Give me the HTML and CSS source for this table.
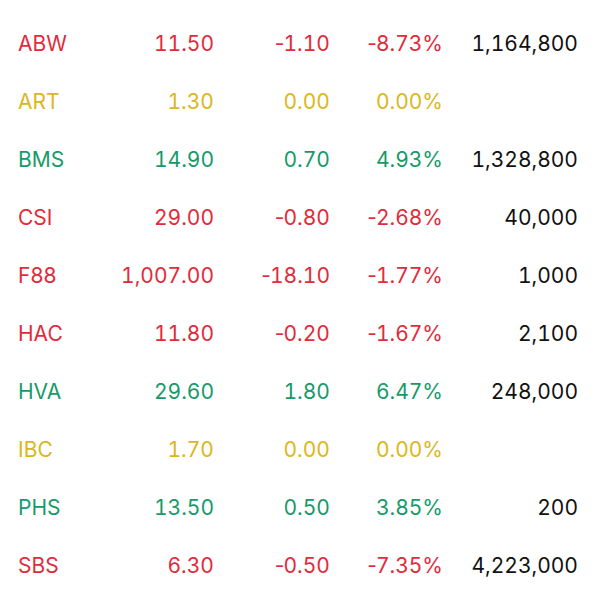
FILE: index.html
```html
<!DOCTYPE html>
<html>
<head>
<meta charset="utf-8">
<link rel="stylesheet" href="styles.css">
</head>
<body>
<div class="table">
  <div class="row down"><span class="sym">ABW</span><span class="num">11.50</span><span class="num"><i>-</i>1.10</span><span class="num"><i>-</i>8.73%</span><span class="vol">1,164,800</span></div>
  <div class="row flat"><span class="sym">ART</span><span class="num">1.30</span><span class="num">0.00</span><span class="num">0.00%</span><span class="vol"></span></div>
  <div class="row up"><span class="sym">BMS</span><span class="num">14.90</span><span class="num">0.70</span><span class="num">4.93%</span><span class="vol">1,328,800</span></div>
  <div class="row down"><span class="sym">CSI</span><span class="num">29.00</span><span class="num"><i>-</i>0.80</span><span class="num"><i>-</i>2.68%</span><span class="vol">40,000</span></div>
  <div class="row down"><span class="sym">F88</span><span class="num">1,007.00</span><span class="num"><i>-</i>18.10</span><span class="num"><i>-</i>1.77%</span><span class="vol">1,000</span></div>
  <div class="row down"><span class="sym">HAC</span><span class="num">11.80</span><span class="num"><i>-</i>0.20</span><span class="num"><i>-</i>1.67%</span><span class="vol">2,100</span></div>
  <div class="row up"><span class="sym">HVA</span><span class="num">29.60</span><span class="num">1.80</span><span class="num">6.47%</span><span class="vol">248,000</span></div>
  <div class="row flat"><span class="sym">IBC</span><span class="num">1.70</span><span class="num">0.00</span><span class="num">0.00%</span><span class="vol"></span></div>
  <div class="row up"><span class="sym">PHS</span><span class="num">13.50</span><span class="num">0.50</span><span class="num">3.85%</span><span class="vol">200</span></div>
  <div class="row down"><span class="sym">SBS</span><span class="num">6.30</span><span class="num"><i>-</i>0.50</span><span class="num"><i>-</i>7.35%</span><span class="vol">4,223,000</span></div>
</div>
</body>
</html>
```
FILE: styles.css
```css
html, body {
  margin: 0;
  padding: 0;
  background: #ffffff;
}
body {
  font-family: Inter, "Noto Sans", sans-serif;
  font-size: 21px;
}
.table {
  padding: 14px 22px 0 18px;
}
.row {
  display: grid;
  grid-template-columns: 82px 114px 116px 113px 135px;
  height: 58px;
  align-items: center;
}
.num, .vol {
  text-align: right;
  font-variant-numeric: tabular-nums;
}
.num i {
  font-style: normal;
  font-variant-numeric: normal;
  margin-right: -1px;
}
.vol {
  color: #111111;
}
.down { color: #e22b3a; }
.flat { color: #dbb71b; }
.up { color: #179a6a; }
```
